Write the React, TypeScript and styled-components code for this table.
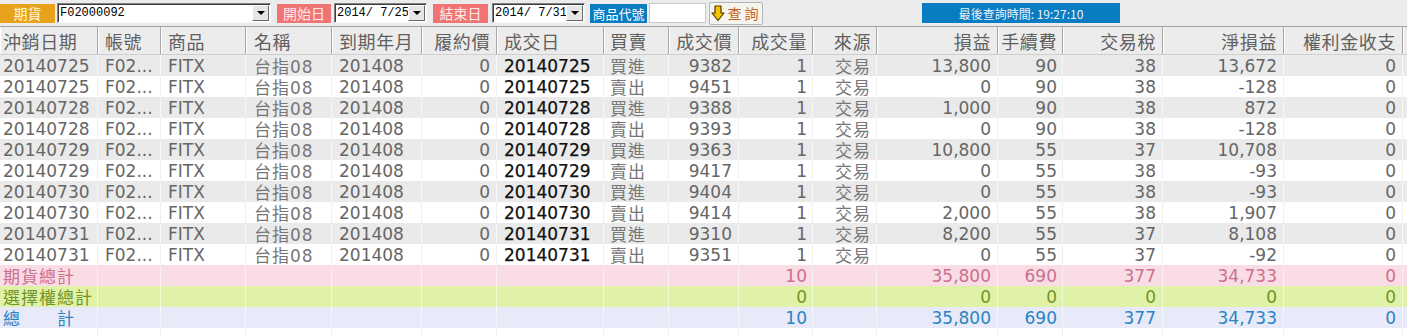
import React from 'react';
import styled, { createGlobalStyle } from 'styled-components';

const GlobalStyle = createGlobalStyle`
  html, body {
    margin: 0;
    padding: 0;
    background: #fff;
  }
  body {
    font-family: "DejaVu Sans", "Noto Sans CJK TC", sans-serif;
  }
`;

type Align = 'left' | 'right';

interface Col {
  title: string;
  width: number;
  align: Align;
  pad: number;
}

const COLS: Col[] = [
  { title: '沖銷日期', width: 98, align: 'left', pad: 3 },
  { title: '帳號', width: 63, align: 'left', pad: 7 },
  { title: '商品', width: 85, align: 'left', pad: 7 },
  { title: '名稱', width: 86, align: 'left', pad: 8 },
  { title: '到期年月', width: 90, align: 'left', pad: 7 },
  { title: '履約價', width: 75, align: 'right', pad: 6 },
  { title: '成交日', width: 107, align: 'left', pad: 7 },
  { title: '買賣', width: 65, align: 'left', pad: 6 },
  { title: '成交價', width: 70, align: 'right', pad: 6 },
  { title: '成交量', width: 74, align: 'right', pad: 5 },
  { title: '來源', width: 64, align: 'right', pad: 5 },
  { title: '損益', width: 121, align: 'right', pad: 6 },
  { title: '手續費', width: 65, align: 'right', pad: 5 },
  { title: '交易稅', width: 100, align: 'right', pad: 6 },
  { title: '淨損益', width: 121, align: 'right', pad: 6 },
  { title: '權利金收支', width: 119, align: 'right', pad: 6 },
];

const gridCols = COLS.map((c) => `${c.width}px`).join(' ') + ' 1fr';

// date, side, price, pnl, fee, tax, net
const TRADES: string[][] = [
  ['20140725', '買進', '9382', '13,800', '90', '38', '13,672'],
  ['20140725', '賣出', '9451', '0', '90', '38', '-128'],
  ['20140728', '買進', '9388', '1,000', '90', '38', '872'],
  ['20140728', '賣出', '9393', '0', '90', '38', '-128'],
  ['20140729', '買進', '9363', '10,800', '55', '37', '10,708'],
  ['20140729', '賣出', '9417', '0', '55', '38', '-93'],
  ['20140730', '買進', '9404', '0', '55', '38', '-93'],
  ['20140730', '賣出', '9414', '2,000', '55', '38', '1,907'],
  ['20140731', '買進', '9310', '8,200', '55', '37', '8,108'],
  ['20140731', '賣出', '9351', '0', '55', '37', '-92'],
];

const TOTALS = [
  { label: '期貨總計', bg: '#f9dce4', fg: '#cc7090', qty: '10', pnl: '35,800', fee: '690', tax: '377', net: '34,733', prem: '0' },
  { label: '選擇權總計', bg: '#dff2a8', fg: '#729426', qty: '0', pnl: '0', fee: '0', tax: '0', net: '0', prem: '0' },
  { label: '總　　計', bg: '#e8eaf9', fg: '#2a84c2', qty: '10', pnl: '35,800', fee: '690', tax: '377', net: '34,733', prem: '0' },
];

/* ---------- toolbar ---------- */

const Toolbar = styled.div`
  display: flex;
  align-items: center;
  height: 26px;
  background: #ececec;
`;

const Tag = styled.div<{ $bg: string; $w: number; $ml?: number; $fg?: string; $size?: number }>`
  display: flex;
  align-items: center;
  justify-content: center;
  width: ${(p) => p.$w}px;
  height: 19px;
  margin-left: ${(p) => p.$ml ?? 0}px;
  background: ${(p) => p.$bg};
  color: ${(p) => p.$fg ?? '#fff'};
  font-family: "Noto Sans CJK TC", sans-serif;
  font-size: ${(p) => p.$size ?? 14}px;
  white-space: nowrap;
`;

const Combo = styled.div<{ $w: number; $ml: number }>`
  display: flex;
  align-items: center;
  box-sizing: border-box;
  width: ${(p) => p.$w}px;
  height: 20px;
  margin-left: ${(p) => p.$ml}px;
  background: #fff;
  border: 1px solid;
  border-color: #828282 #f6f6f6 #f6f6f6 #828282;
  box-shadow: inset 1px 1px 0 #3c3c3c;
`;

const ComboText = styled.span`
  flex: 1;
  overflow: hidden;
  padding-left: 2px;
  font-family: "Liberation Mono", monospace;
  font-size: 12px;
  color: #000;
  white-space: nowrap;
`;

const DropBtn = styled.div`
  display: flex;
  align-items: center;
  justify-content: center;
  box-sizing: border-box;
  width: 17px;
  height: 16px;
  margin-right: 1px;
  background: #e6e6e6;
  border: 1px solid;
  border-color: #fff #6a6a6a #6a6a6a #fff;

  &::after {
    content: '';
    width: 0;
    height: 0;
    border-left: 4px solid transparent;
    border-right: 4px solid transparent;
    border-top: 4px solid #000;
  }
`;

const CodeInput = styled.div`
  box-sizing: border-box;
  width: 57px;
  height: 20px;
  margin-left: 2px;
  background: #fff;
  border: 1px solid #c8c8c8;
`;

const QueryButton = styled.div`
  display: flex;
  align-items: center;
  justify-content: center;
  gap: 3px;
  box-sizing: border-box;
  width: 54px;
  height: 23px;
  margin-left: 3px;
  background: #f6f4ef;
  border: 1px solid #b4b4b4;
  border-radius: 2px;
  color: #c4621c;
  font-family: "Noto Sans CJK TC", sans-serif;
  font-size: 14px;
  letter-spacing: 3px;
`;

const TimeBar = styled.div`
  display: flex;
  align-items: center;
  justify-content: center;
  width: 198px;
  height: 20px;
  margin-left: 159px;
  background: #0a7cc1;
  color: #e9f2fa;
  font-family: "Noto Sans CJK TC", sans-serif;
  font-size: 12px;
`;

/* ---------- grid ---------- */

const HeaderRow = styled.div`
  display: grid;
  grid-template-columns: ${gridCols};
  height: 27px;
  background: #ececec;
  border-top: 1px solid #a2a2a2;
  border-bottom: 1px solid #cfcfcf;
`;

const HeadCell = styled.div<{ $align: Align; $pad: number }>`
  display: flex;
  align-items: center;
  justify-content: ${(p) => (p.$align === 'right' ? 'flex-end' : 'flex-start')};
  padding: 0 ${(p) => p.$pad}px;
  border-right: 1px solid #a6a6a6;
  box-shadow: inset 1px 0 0 #fff;
  color: #606060;
  font-size: 18px;
  letter-spacing: 0.6px;
  white-space: nowrap;
  overflow: hidden;

  &:last-child {
    border-right: none;
  }
`;

const Row = styled.div<{ $bg: string; $line: string }>`
  display: grid;
  grid-template-columns: ${gridCols};
  height: 21px;
  background: ${(p) => p.$bg};

  & > div {
    border-right: 1px solid ${(p) => p.$line};
  }
  & > div:last-child {
    border-right: none;
  }
`;

const Cell = styled.div<{ $align: Align; $pad: number; $color?: string; $strong?: boolean; $cjk?: boolean }>`
  display: flex;
  align-items: center;
  justify-content: ${(p) => (p.$align === 'right' ? 'flex-end' : 'flex-start')};
  padding: 0 ${(p) => p.$pad}px;
  color: ${(p) => p.$color ?? (p.$cjk ? '#777' : '#666')};
  font-size: 17px;
  letter-spacing: ${(p) => (p.$cjk ? '1px' : '0')};
  -webkit-text-stroke: ${(p) => (p.$strong ? '0.25px #111' : '0')};
  white-space: nowrap;
  overflow: hidden;
`;

const Filler = styled.div`
  display: grid;
  grid-template-columns: ${gridCols};
  height: 8px;

  & > div {
    border-right: 1px solid #f0f0f0;
  }
`;

function ArrowDown() {
  return (
    <svg width="14" height="17" viewBox="0 0 14 17">
      <polygon
        points="4,1 10,1 10,8 13,8 7,15.5 1,8 4,8"
        fill="#f6c400"
        stroke="#4e3a00"
        strokeWidth="1.2"
        strokeLinejoin="round"
      />
    </svg>
  );
}

function tradeCells(t: string[]) {
  const [date, side, price, pnl, fee, tax, net] = t;
  return [date, 'F02...', 'FITX', '台指08', '201408', '0', date, side, price, '1', '交易', pnl, fee, tax, net, '0'];
}

function App() {
  return (
    <>
      <GlobalStyle />
      <Toolbar>
        <Tag $bg="#e9a21b" $w={55} $fg="#fff6d8">期貨</Tag>
        <Combo $w={214} $ml={2}>
          <ComboText>F02000092</ComboText>
          <DropBtn />
        </Combo>
        <Tag $bg="#f07474" $w={54} $ml={6} $fg="#ffeaea">開始日</Tag>
        <Combo $w={93} $ml={3}>
          <ComboText>2014/ 7/25</ComboText>
          <DropBtn />
        </Combo>
        <Tag $bg="#f07474" $w={55} $ml={6} $fg="#ffeaea">結束日</Tag>
        <Combo $w={93} $ml={4}>
          <ComboText>2014/ 7/31</ComboText>
          <DropBtn />
        </Combo>
        <Tag $bg="#0a7cc1" $w={57} $ml={5} $size={13}>商品代號</Tag>
        <CodeInput />
        <QueryButton>
          <ArrowDown />
          <span>查詢</span>
        </QueryButton>
        <TimeBar>最後查詢時間:&nbsp;19:27:10</TimeBar>
      </Toolbar>

      <HeaderRow>
        {COLS.map((c) => (
          <HeadCell key={c.title} $align={c.align} $pad={c.pad}>
            {c.title}
          </HeadCell>
        ))}
        <HeadCell $align="left" $pad={0} />
      </HeaderRow>

      {TRADES.map((t, i) => (
        <Row key={i} $bg={i % 2 === 0 ? '#eaeaea' : '#fff'} $line={i % 2 === 0 ? '#f6f6f6' : '#efefef'}>
          {tradeCells(t).map((v, j) => (
            <Cell
              key={j}
              $align={COLS[j].align}
              $pad={COLS[j].pad}
              $strong={j === 6}
              $color={j === 6 ? '#111' : undefined}
              $cjk={j === 3 || j === 7 || j === 10}
            >
              {v}
            </Cell>
          ))}
          <Cell $align="left" $pad={0} />
        </Row>
      ))}

      {TOTALS.map((r) => {
        const values: Record<number, string> = { 0: r.label, 9: r.qty, 11: r.pnl, 12: r.fee, 13: r.tax, 14: r.net, 15: r.prem };
        return (
          <Row key={r.label} $bg={r.bg} $line="rgba(255,255,255,0.55)">
            {COLS.map((c, j) => (
              <Cell key={j} $align={c.align} $pad={c.pad} $color={r.fg} $cjk={j === 0}>
                {values[j] ?? ''}
              </Cell>
            ))}
            <Cell $align="left" $pad={0} />
          </Row>
        );
      })}

      <Filler>
        {COLS.map((c) => (
          <div key={c.title} />
        ))}
      </Filler>
    </>
  );
}

export default App;
